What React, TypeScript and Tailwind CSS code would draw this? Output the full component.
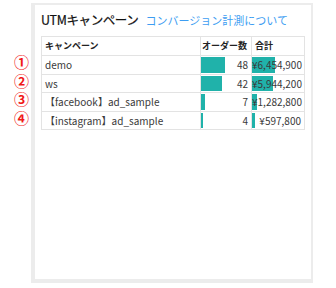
const rows = [
  { name: "demo", orders: 48, total: 6454900 },
  { name: "ws", orders: 42, total: 5944200 },
  { name: "【facebook】ad_sample", orders: 7, total: 1282800 },
  { name: "【instagram】ad_sample", orders: 4, total: 597800 },
];

const marks = ["①", "②", "③", "④"];

const maxOrders = Math.max(...rows.map((r) => r.orders));
const maxTotal = Math.max(...rows.map((r) => r.total));

function yen(n: number) {
  return "¥" + n.toLocaleString("en-US");
}

export default function App() {
  return (
    <div
      className="flex w-[336px] h-[288px] bg-white text-[#3a3a3a]"
      style={{ fontFamily: '"Noto Sans CJK JP", "Noto Sans", sans-serif' }}
    >
      <div className="w-[31px] pt-[54px] flex flex-col gap-[3px]">
        {marks.map((m) => (
          <div key={m} className="h-[15.6px] pl-[14px] text-[15px] leading-[15.6px] font-bold text-[#f01818]">
            {m}
          </div>
        ))}
      </div>
      <div className="mt-[3px] w-[282px] h-[280px] border-l-4 border-t-2 border-r-2 border-b-4 border-[#ececec]">
        <div className="pl-[6px] pr-[7px] pt-[6px]">
          <div className="flex items-baseline h-[22px] whitespace-nowrap">
            <span className="text-[12.5px] font-normal text-[#111] tracking-[-0.4px] [-webkit-text-stroke:0.2px_#111]">UTMキャンペーン</span>
            <span className="ml-[7px] text-[11px] text-[#3d9df2]">コンバージョン計測について</span>
          </div>
          <table className="mt-[3px] w-[263px] border-collapse border border-[#e3e3e3] text-[10px] table-fixed">
            <colgroup>
              <col className="w-[159px]" />
              <col className="w-[51px]" />
              <col className="w-[53px]" />
            </colgroup>
            <thead>
              <tr className="h-[19px]">
                <th className="border border-[#e3e3e3] text-left font-bold px-[3px] text-[9px] text-[#222]">キャンペーン</th>
                <th className="border border-[#e3e3e3] text-left font-bold px-[1px] text-[9px] text-[#222]">オーダー数</th>
                <th className="border border-[#e3e3e3] text-left font-bold px-[3px] text-[9px] text-[#222]">合計</th>
              </tr>
            </thead>
            <tbody>
              {rows.map((r) => (
                <tr key={r.name} className="h-[18.6px]">
                  <td className="border border-[#e3e3e3] px-[3px] whitespace-nowrap">{r.name}</td>
                  <td className="border border-[#e3e3e3] relative p-0">
                    <div
                      className="absolute left-0 top-[1px] bottom-[1px] bg-[#20b2aa]"
                      style={{ width: `${(r.orders / maxOrders) * 24}px` }}
                    />
                    <div className="relative text-right pr-[3px]">{r.orders}</div>
                  </td>
                  <td className="border border-[#e3e3e3] relative p-0">
                    <div
                      className="absolute left-0 top-[1px] bottom-[1px] bg-[#20b2aa]"
                      style={{ width: `${Math.max(3, (r.total / maxTotal) * 23)}px` }}
                    />
                    <div className="relative text-right pr-[3px] whitespace-nowrap">{yen(r.total)}</div>
                  </td>
                </tr>
              ))}
            </tbody>
          </table>
        </div>
      </div>
    </div>
  );
}
